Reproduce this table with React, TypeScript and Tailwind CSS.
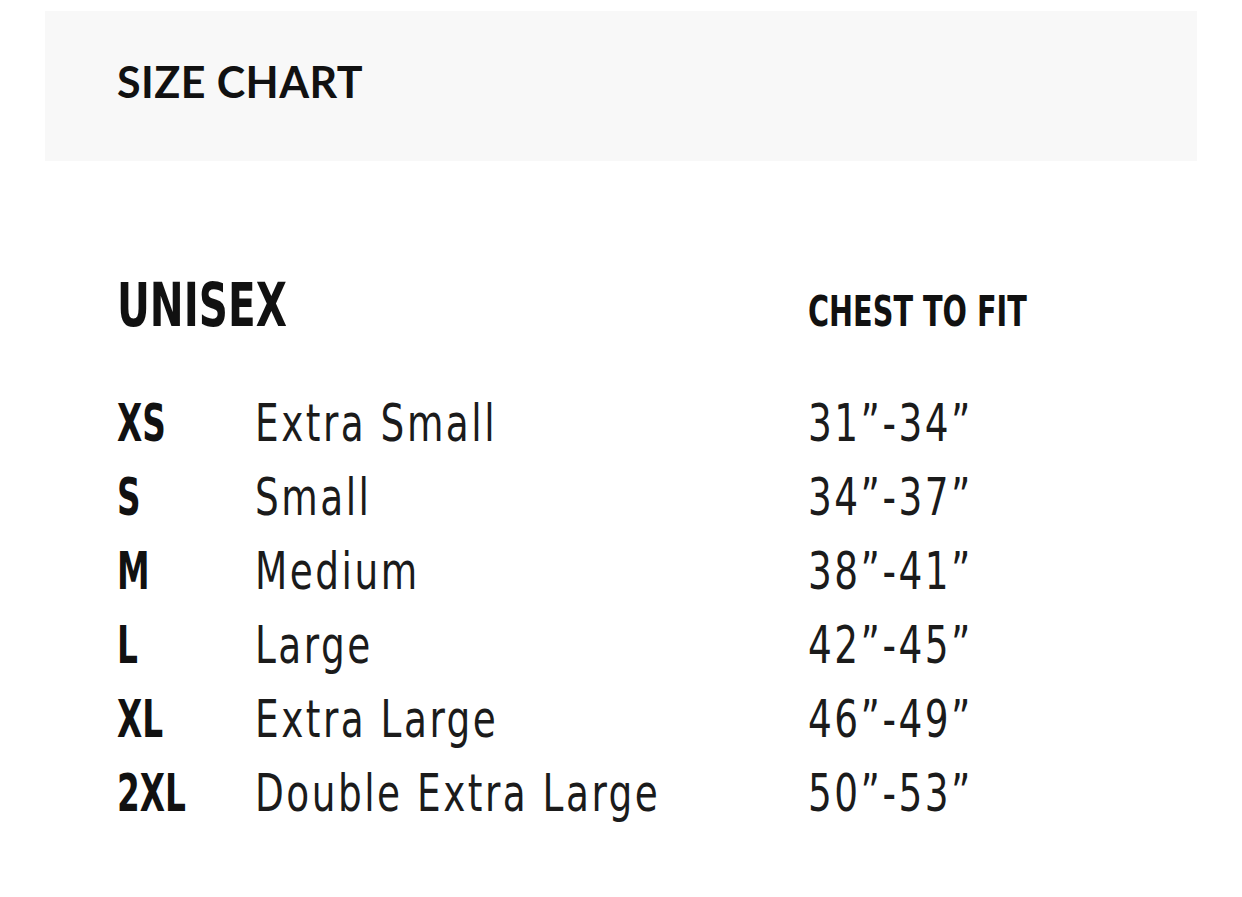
const rows = [
  { code: 'XS', name: 'Extra Small', chest: '31”-34”' },
  { code: 'S', name: 'Small', chest: '34”-37”' },
  { code: 'M', name: 'Medium', chest: '38”-41”' },
  { code: 'L', name: 'Large', chest: '42”-45”' },
  { code: 'XL', name: 'Extra Large', chest: '46”-49”' },
  { code: '2XL', name: 'Double Extra Large', chest: '50”-53”' },
]

// condensed face, squeezed a bit more to get the narrow chart lettering
const narrow = "font-['DejaVu_Sans_Condensed','Liberation_Sans_Narrow','Liberation_Sans',sans-serif]"

export default function App() {
  return (
    <div className="min-h-screen bg-white px-[45px] pt-[11px]">
      {/* Title bar */}
      <div className="flex h-[150px] items-center bg-[#f8f8f8] pb-[7px] pl-[72px]">
        <h1 className="font-['Lato',sans-serif] text-[43px] font-bold tracking-[0.01em] text-[#111]">
          SIZE CHART
        </h1>
      </div>

      {/* Chart */}
      <div className={`pl-[72px] pt-[113px] text-[#1b1b1b] ${narrow}`}>
        <div className="flex items-baseline">
          <div className="w-[691px] text-[60px] font-bold leading-[63px] text-[#111]">
            <span className="inline-block origin-left scale-x-[0.75]">UNISEX</span>
          </div>
          <div className="text-[42px] font-bold leading-none text-[#111]">
            <span className="inline-block origin-left scale-x-[0.76]">CHEST TO FIT</span>
          </div>
        </div>

        <div className="mt-[49px]">
          {rows.map((r) => (
            <div key={r.code} className="flex h-[74px] items-center text-[52px] leading-[74px]">
              <div className="w-[138px] font-bold text-[#111]">
                <span className="inline-block origin-left scale-x-[0.7]">{r.code}</span>
              </div>
              <div className="w-[553px] tracking-[0.06em]">
                <span className="inline-block origin-left scale-x-[0.8]">{r.name}</span>
              </div>
              <div className="tracking-[0.06em]">
                <span className="inline-block origin-left scale-x-[0.8]">{r.chest}</span>
              </div>
            </div>
          ))}
        </div>
      </div>
    </div>
  )
}
